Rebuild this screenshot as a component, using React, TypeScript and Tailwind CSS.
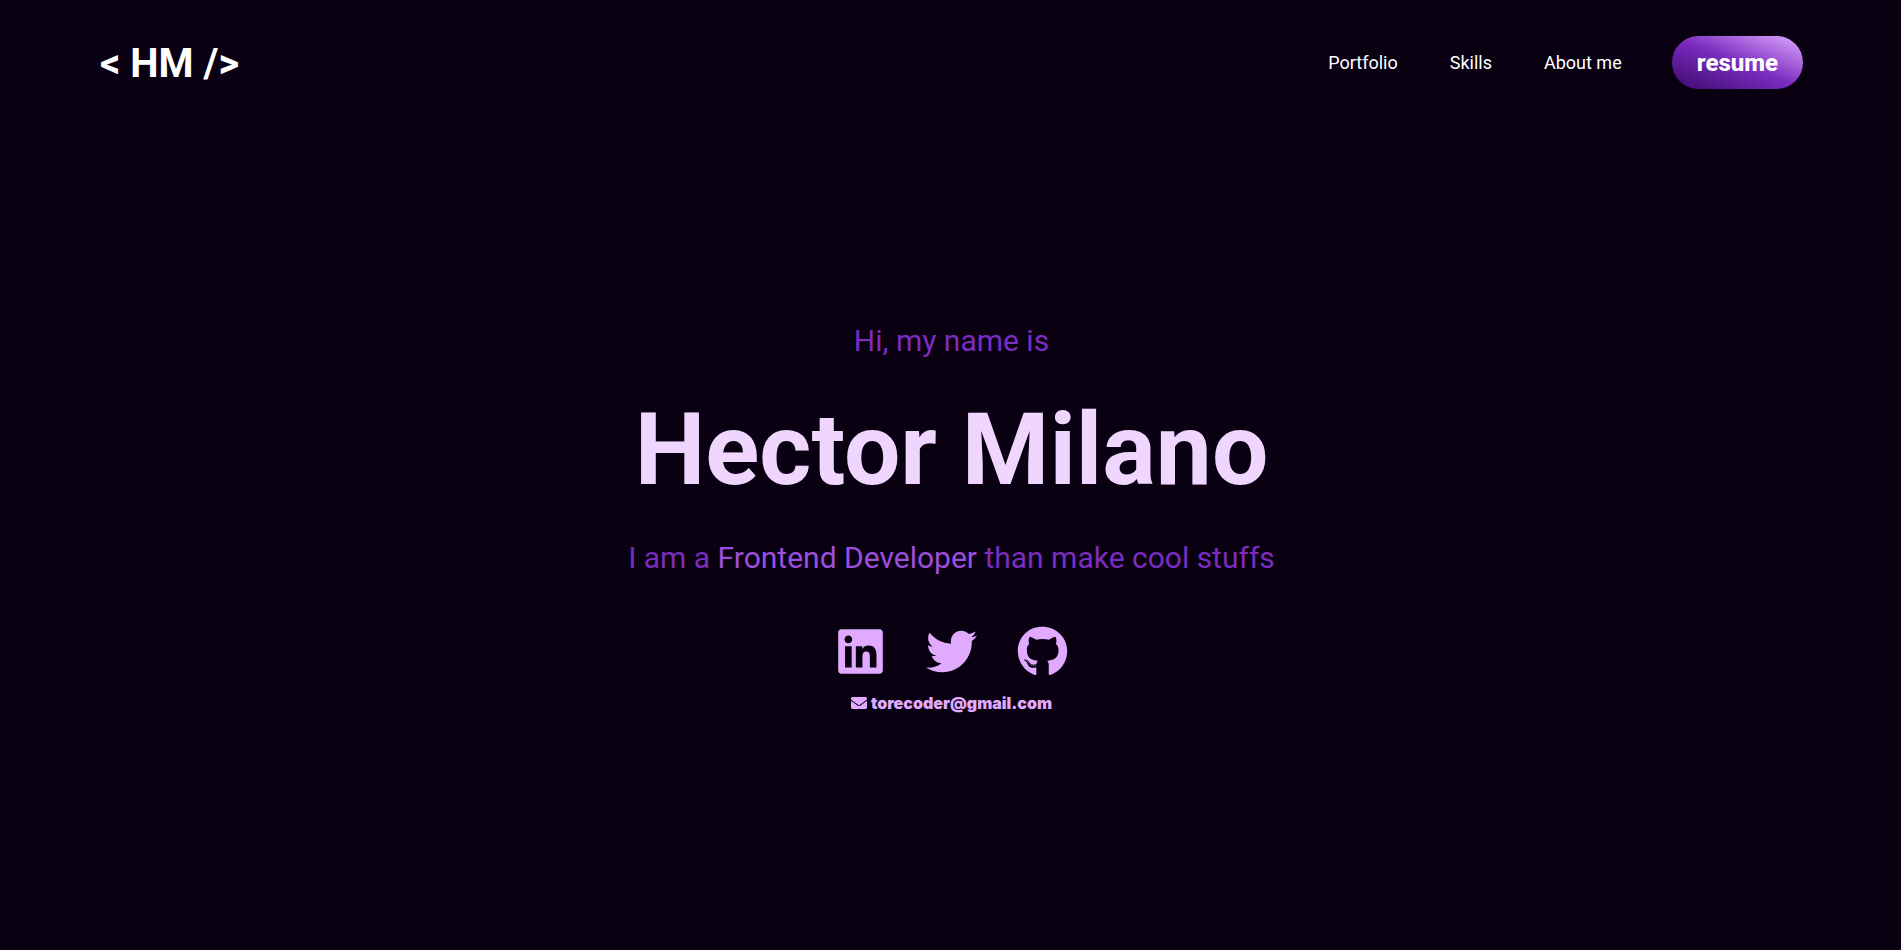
import { FaEnvelope, FaGithub, FaLinkedin, FaTwitter } from "react-icons/fa";

const links = [
  { label: "Portfolio", href: "#portfolio" },
  { label: "Skills", href: "#skills" },
  { label: "About me", href: "#about" },
];

function Header() {
  return (
    <header className="flex items-start justify-between pt-9 pr-[98px] pl-[100px]">
      <a href="#home" className="text-[40px] leading-14 font-bold">
        &lt; HM /&gt;
      </a>
      <nav aria-label="Main" className="flex items-center">
        <ul className="mr-[50px] flex gap-[52px] text-lg font-normal">
          {links.map((link) => (
            <li key={link.href}>
              <a href={link.href}>{link.label}</a>
            </li>
          ))}
        </ul>
        <button
          type="button"
          className="h-[53px] rounded-full bg-linear-[to_top_right,#3c096c,#7b2cbf_50%,#e0aaff] px-[25px] text-2xl font-extrabold"
        >
          resume
        </button>
      </nav>
    </header>
  );
}

function Hero() {
  return (
    <main id="home" className="flex flex-col items-center pt-[229px] pl-0.5 text-center">
      <p className="text-[30px] leading-10 text-[#7b2cbf]">Hi, my name is</p>
      <h1 className="mt-[29px] text-[100px] leading-[120px] font-bold text-[#f0d6ff]">Hector Milano</h1>
      <p className="mt-7 text-[30px] leading-10 text-[#7b2cbf]">
        I am a <span className="text-[#9d4edd]">Frontend Developer</span> than make cool stuffs
      </p>
      <div className="mt-12 flex gap-10 text-[#e0aaff]">
        <a href="#linkedin" aria-label="LinkedIn">
          <FaLinkedin className="h-[51px] w-auto" />
        </a>
        <a href="#twitter" aria-label="Twitter">
          <FaTwitter className="h-[51px] w-auto" />
        </a>
        <a href="#github" aria-label="GitHub">
          <FaGithub className="h-[51px] w-auto" />
        </a>
      </div>
      <a
        href="mailto:torecoder@gmail.com"
        className="mt-[14px] flex items-center gap-1 font-[Inter,sans-serif] text-base leading-6 font-black text-[#e0aaff]"
      >
        <FaEnvelope className="size-4" />
        torecoder@gmail.com
      </a>
    </main>
  );
}

export default function App() {
  return (
    <div className="min-h-screen bg-[#090012] font-[Roboto,sans-serif] text-white">
      <Header />
      <Hero />
    </div>
  );
}
